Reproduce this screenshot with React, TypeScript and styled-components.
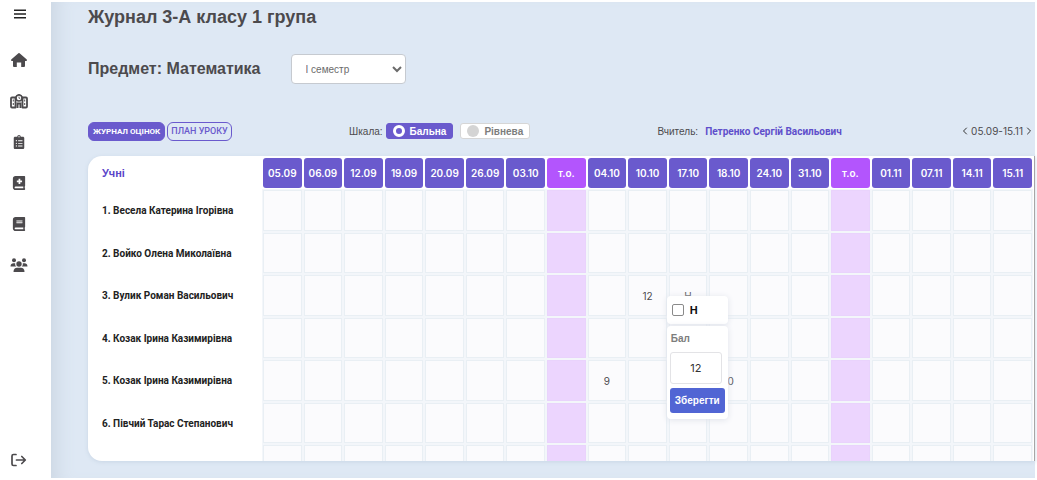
import React from "react";
import styled, { createGlobalStyle, css } from "styled-components";
import { BiMenu } from "react-icons/bi";
import { FaBook, FaBookMedical, FaClipboardList } from "react-icons/fa";
import { FiChevronLeft, FiChevronRight } from "react-icons/fi";

const GlobalStyle = createGlobalStyle`
  * { box-sizing: border-box; }
  body {
    margin: 0;
    background: #ffffff;
    font-family: "Liberation Sans", Arial, sans-serif;
    color: #4c4a4d;
  }
  button, input, select { font-family: inherit; }
`;

const Page = styled.div`
  display: flex;
  min-height: 100vh;
  padding: 2px 2px 2px 0;
`;

const Sidebar = styled.nav`
  display: flex;
  flex-direction: column;
  align-items: center;
  flex: none;
  width: 51px;
  padding: 3px 13px 9px 0;
`;

const MenuButton = styled.button`
  display: flex;
  border: 0;
  padding: 0;
  margin: 0 0 28px 2px;
  background: none;
  color: #222222;
  font-size: 18px;
`;

const NavLinks = styled.div`
  display: flex;
  flex-direction: column;
  gap: 23px;
  flex: 1;
`;

const NavLink = styled.a<{ $size?: number }>`
  display: flex;
  align-items: center;
  justify-content: center;
  width: 18px;
  height: 18px;
  color: #4c4a4d;

  svg {
    flex: none;
    width: ${(p) => p.$size ?? 18}px;
    height: ${(p) => p.$size ?? 18}px;
  }
`;

const Main = styled.main`
  flex: 1;
  min-width: 0;
  padding: 0 0 16px 37px;
  background: #dee8f4;
  box-shadow: inset 18px 0 18px -12px #ccd7e3;
`;

const Title = styled.h1`
  margin: 0;
  font-size: 18px;
  line-height: 30px;
`;

const SubjectRow = styled.div`
  display: flex;
  align-items: center;
  gap: 30px;
  margin-top: 22px;
`;

const Subject = styled.h2`
  margin: 0;
  font-size: 16px;
  line-height: 30px;
`;

const TermSelect = styled.select`
  width: 115px;
  height: 30px;
  padding: 0 0 0 10px;
  border: 1px solid #c6cad0;
  border-radius: 4px;
  background: #ffffff;
  color: #6b6b6b;
  font-size: 10px;
`;

const Toolbar = styled.div`
  display: flex;
  align-items: center;
  justify-content: space-between;
  margin-top: 37px;
  height: 20px;
  font-size: 10px;
`;

const Group = styled.div<{ $gap: number }>`
  display: flex;
  align-items: center;
  gap: ${(p) => p.$gap}px;
`;

const TeacherGroup = styled(Group)`
  padding-left: 10px;
`;

const TabButton = styled.button<{ $active?: boolean }>`
  height: 19px;
  padding: 0 ${(p) => (p.$active ? 4 : 3)}px;
  border: 1px solid #6a5acd;
  border-radius: 6px;
  background: ${(p) => (p.$active ? "#6a5acd" : "transparent")};
  color: ${(p) => (p.$active ? "#ffffff" : "#6a5acd")};
  font-family: Roboto, sans-serif;
  font-size: ${(p) => (p.$active ? 8 : 9)}px;
  font-weight: ${(p) => (p.$active ? 700 : 500)};
  white-space: nowrap;
`;

const Scale = styled.label<{ $active?: boolean }>`
  display: flex;
  align-items: center;
  gap: 5px;
  height: 16px;
  padding: 0 6px;
  border-radius: 3px;
  border: 1px solid ${(p) => (p.$active ? "#6a5acd" : "#d6d6d6")};
  background: ${(p) => (p.$active ? "#6a5acd" : "#ffffff")};
  color: ${(p) => (p.$active ? "#ffffff" : "#7d7d7d")};
  font-weight: 700;

  input {
    appearance: none;
    width: 12px;
    height: 12px;
    margin: 0;
    border-radius: 50%;
    background: #d4d4d4;
  }

  input:checked {
    border: 3px solid #ffffff;
    background: #6a5acd;
  }
`;

const ScaleOptions = styled.div`
  display: flex;
  gap: 7px;
`;

const TeacherLink = styled.a`
  color: #5f4fcb;
  font-family: Roboto, sans-serif;
  font-size: 10px;
  font-weight: 700;
  text-decoration: none;
`;

const ArrowButton = styled.button`
  display: flex;
  border: 0;
  padding: 0;
  background: none;
  color: #333333;
  font-size: 12px;
`;

const Period = styled.span`
  font-family: Inter, sans-serif;
  font-size: 10px;
`;

const Card = styled.section`
  height: 305px;
  margin-top: 15px;
  overflow: hidden;
  border-radius: 14px 0 0 14px;
  border-right: 1px solid #a6a6a6;
  background: #ffffff;
  box-shadow: 0 1px 4px #c9d6e5;
`;

const Table = styled.table`
  width: 100%;
  table-layout: fixed;
  border-collapse: separate;
  border-spacing: 2px;
  font-family: Inter, sans-serif;
  font-size: 10px;

  thead tr {
    height: 30px;
  }

  tbody tr {
    height: 41px;
  }

  tbody tr:nth-child(even) {
    height: 40px;
  }
`;

const PupilsHead = styled.th`
  width: 171px;
  padding: 0 0 0 12px;
  color: #5b45c9;
  font-size: 11px;
  font-family: "Liberation Sans", Arial, sans-serif;
  text-align: left;
`;

const DateHead = styled.th<{ $theme?: boolean }>`
  padding: 0;
  border-radius: 3px;
  background: ${(p) => (p.$theme ? "#b355fd" : "#6a5acd")};
  color: #ffffff;
  font-weight: 600;
`;

const Pupil = styled.th`
  padding: 0 0 0 12px;
  color: #222222;
  font-family: Roboto, sans-serif;
  text-align: left;
  white-space: nowrap;
`;

const Cell = styled.td<{ $theme?: boolean }>`
  position: relative;
  padding: 0;
  border: 1px solid #e9eff4;
  background: #fbfbfd;
  box-shadow: 0 0 0 1px #f3f6fa;
  text-align: center;
  ${(p) =>
    p.$theme &&
    css`
      border-color: #e9d3fc;
      background: #ecd5fe;
    `}
`;

const Editor = styled.form`
  position: absolute;
  z-index: 1;
  top: 20px;
  left: -3px;
  display: flex;
  flex-direction: column;
  gap: 2px;
  width: 61px;
  font-family: "Liberation Sans", Arial, sans-serif;
  text-align: left;
`;

const EditorPanel = styled.div`
  padding: 6px 3px;
  border-radius: 4px;
  background: #ffffff;
  box-shadow: 0 1px 6px #dfe2ea;
`;

const AbsentLabel = styled.label`
  display: flex;
  align-items: center;
  gap: 6px;
  height: 16px;
  padding-left: 2px;
  color: #111111;
  font-size: 11px;
  font-weight: 700;

  input {
    appearance: none;
    width: 12px;
    height: 12px;
    margin: 0;
    border: 1px solid #8a8a8a;
    border-radius: 2px;
    background: #ffffff;
  }
`;

const GradeLabel = styled.label`
  display: block;
  padding-left: 1px;
  color: #7d7d7d;
  font-size: 10px;
  font-weight: 700;
  line-height: 14px;
`;

const GradeInput = styled.input`
  width: 52px;
  height: 32px;
  margin-top: 6px;
  padding: 0;
  border: 1px solid #e3e3e6;
  border-radius: 3px;
  background: #ffffff;
  color: #333333;
  font-family: Inter, sans-serif;
  font-size: 11px;
  text-align: center;
`;

const SaveButton = styled.button`
  display: block;
  width: 55px;
  height: 25px;
  margin-top: 4px;
  padding: 0;
  border: 0;
  border-radius: 3px;
  background: #5165d4;
  color: #ffffff;
  font-size: 10px;
  font-weight: 700;
`;

function HomeIcon() {
  return (
    <svg viewBox="0 0 18 18" fill="currentColor">
      <path d="M8.400 2.200Q9 1.700 9.600 2.200L16.800 8.600Q17.400 9.700 16.300 9.900H15V15Q15 16 14 16H11.200V11.500H6.800V16H4Q3 16 3 15V9.900H1.700Q0.600 9.700 1.200 8.600Z" />
    </svg>
  );
}

function SchoolIcon() {
  return (
    <svg viewBox="0 0 18 18" fill="none" stroke="currentColor">
      <path
        d="M5 5.500H2A1 1 0 0 0 1 6.500V14.500A1 1 0 0 0 2 15.500H5.500V5.500L9 3L12.500 5.500V15.500H16A1 1 0 0 0 17 14.500V6.500A1 1 0 0 0 16 5.500H13"
        strokeWidth="1.800"
        strokeLinejoin="round"
      />
      <path d="M7.500 16V11.500H10.500V16" strokeWidth="2" />
      <path d="M3.300 7.500V9.500M3.300 11V13M14.700 7.500V9.500M14.700 11V13" strokeWidth="1" />
      <circle cx="9" cy="6" r="3" fill="#ffffff" strokeWidth="1.600" />
      <path d="M9 4.500V6.300H10.200" strokeWidth="0.800" />
    </svg>
  );
}

function GroupIcon() {
  return (
    <svg viewBox="0 0 18 18" fill="currentColor">
      <circle cx="4" cy="4.200" r="2" />
      <circle cx="14" cy="4.200" r="2" />
      <circle cx="9" cy="8" r="2.700" />
      <path d="M0.500 10.500C0.500 8 1.800 7.200 3.500 7.200H5.200C5 8.600 5.400 9.800 6.300 10.500Z" />
      <path d="M17.500 10.500C17.500 8 16.200 7.200 14.500 7.200H12.800C13 8.600 12.600 9.800 11.700 10.500Z" />
      <path d="M3.500 16C3.500 13 5 11.700 7 11.700H11C13 11.700 14.500 13 14.500 16Z" />
    </svg>
  );
}

function ExitIcon() {
  return (
    <svg
      viewBox="0 0 18 18"
      fill="none"
      stroke="currentColor"
      strokeWidth="1.700"
      strokeLinecap="round"
      strokeLinejoin="round"
    >
      <path d="M6 3.500H3.500A1.500 1.500 0 0 0 2 5V13A1.500 1.500 0 0 0 3.500 14.500H6" />
      <path d="M6.500 9H15M11.800 5.500L15.300 9L11.800 12.500" />
    </svg>
  );
}

const NAV = [
  { label: "Головна", icon: <HomeIcon />, size: 18 },
  { label: "Школа", icon: <SchoolIcon />, size: 18 },
  { label: "Завдання", icon: <FaClipboardList />, size: 14 },
  { label: "Новий журнал", icon: <FaBookMedical />, size: 14 },
  { label: "Журнали", icon: <FaBook />, size: 14 },
  { label: "Групи", icon: <GroupIcon />, size: 18 },
];

const THEME = "т.о.";

const DATES = [
  "05.09", "06.09", "12.09", "19.09", "20.09", "26.09", "03.10", THEME,
  "04.10", "10.10", "17.10", "18.10", "24.10", "31.10", THEME,
  "01.11", "07.11", "14.11", "15.11",
];

const PUPILS: { name: string; grades: Record<string, string> }[] = [
  { name: "1. Весела Катерина Ігорівна", grades: {} },
  { name: "2. Войко Олена Миколаївна", grades: {} },
  { name: "3. Вулик Роман Васильович", grades: { "10.10": "12", "17.10": "Н" } },
  { name: "4. Козак Ірина Казимирівна", grades: {} },
  { name: "5. Козак Ірина Казимирівна", grades: { "04.10": "9", "18.10": "10" } },
  { name: "6. Півчий Тарас Степанович", grades: {} },
  { name: "", grades: {} },
];

function GradeEditor() {
  return (
    <Editor onSubmit={(e) => e.preventDefault()}>
      <EditorPanel>
        <AbsentLabel>
          <input type="checkbox" />Н
        </AbsentLabel>
      </EditorPanel>
      <EditorPanel>
        <GradeLabel htmlFor="grade">Бал</GradeLabel>
        <GradeInput id="grade" defaultValue="12" />
        <SaveButton type="submit">Зберегти</SaveButton>
      </EditorPanel>
    </Editor>
  );
}

export default function App() {
  return (
    <Page>
      <GlobalStyle />
      <Sidebar>
        <MenuButton aria-label="Меню"><BiMenu /></MenuButton>
        <NavLinks>
          {NAV.map((item) => (
            <NavLink key={item.label} href="#" aria-label={item.label} $size={item.size}>
              {item.icon}
            </NavLink>
          ))}
        </NavLinks>
        <NavLink href="#" aria-label="Вийти"><ExitIcon /></NavLink>
      </Sidebar>
      <Main>
        <Title>Журнал 3-А класу 1 група</Title>
        <SubjectRow>
          <Subject>Предмет: Математика</Subject>
          <TermSelect aria-label="Семестр">
            <option>I семестр</option>
          </TermSelect>
        </SubjectRow>
        <Toolbar>
          <Group $gap={2}>
            <TabButton $active>ЖУРНАЛ ОЦІНОК</TabButton>
            <TabButton>ПЛАН УРОКУ</TabButton>
          </Group>
          <Group $gap={3}>
            <span>Шкала:</span>
            <ScaleOptions>
              <Scale $active>
                <input type="radio" name="scale" defaultChecked />Бальна
              </Scale>
              <Scale>
                <input type="radio" name="scale" />Рівнева
              </Scale>
            </ScaleOptions>
          </Group>
          <TeacherGroup $gap={7}>
            <span>Вчитель:</span>
            <TeacherLink href="#">Петренко Сергій Васильович</TeacherLink>
          </TeacherGroup>
          <Group $gap={0}>
            <ArrowButton aria-label="Попередній період"><FiChevronLeft /></ArrowButton>
            <Period>05.09-15.11</Period>
            <ArrowButton aria-label="Наступний період"><FiChevronRight /></ArrowButton>
          </Group>
        </Toolbar>
        <Card>
          <Table>
            <thead>
              <tr>
                <PupilsHead scope="col">Учні</PupilsHead>
                {DATES.map((date, i) => (
                  <DateHead key={i} scope="col" $theme={date === THEME}>{date}</DateHead>
                ))}
              </tr>
            </thead>
            <tbody>
              {PUPILS.map((pupil, row) => (
                <tr key={row}>
                  <Pupil scope="row">{pupil.name}</Pupil>
                  {DATES.map((date, i) => (
                    <Cell key={i} $theme={date === THEME}>
                      {pupil.grades[date]}
                      {row === 2 && date === "17.10" && <GradeEditor />}
                    </Cell>
                  ))}
                </tr>
              ))}
            </tbody>
          </Table>
        </Card>
      </Main>
    </Page>
  );
}
